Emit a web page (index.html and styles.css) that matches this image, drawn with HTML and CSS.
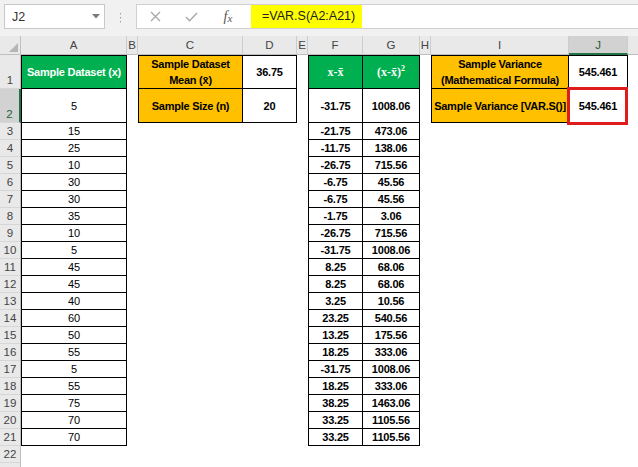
FILE: index.html
```html
<!DOCTYPE html>
<html lang="en">
<head>
    <meta charset="UTF-8">
    <title>Sample Variance - VAR.S</title>
    <link rel="stylesheet" href="styles.css">
</head>
<body>
    <div class="topbar">
        <div class="namebox">
            <span>J2</span>
            <svg class="caret" width="8" height="5" viewBox="0 0 8 5"><path d="M0 0 L8 0 L4 4.5 Z" fill="#7a7a7a"/></svg>
        </div>
        <svg class="grip" width="3" height="10" viewBox="0 0 3 10">
            <rect x="1" y="0" width="1" height="1.4" fill="#9a9a9a"/>
            <rect x="1" y="4" width="1" height="1.4" fill="#9a9a9a"/>
            <rect x="1" y="8" width="1" height="1.4" fill="#9a9a9a"/>
        </svg>
        <div class="formula">
            <div class="fbtn">
                <svg width="11" height="11" viewBox="0 0 11 11"><path d="M1 1 L10 10 M10 1 L1 10" stroke="#a8a8a8" stroke-width="1.3"/></svg>
            </div>
            <div class="fbtn">
                <svg width="13" height="10" viewBox="0 0 13 10"><path d="M1 5 L4.6 8.8 L12 1" fill="none" stroke="#a8a8a8" stroke-width="1.4"/></svg>
            </div>
            <div class="fbtn fx"><span>f<sub>x</sub></span></div>
            <div class="ftext"><span class="hl">=VAR.S(A2:A21)</span></div>
        </div>
    </div>

    <div class="sheet" id="sheet">
        <!-- column headers -->
        <div class="corner">
            <svg width="9" height="9" viewBox="0 0 9 9"><path d="M9 0 L9 9 L0 9 Z" fill="#b5b5b5"/></svg>
        </div>
        <div class="ch">A</div>
        <div class="ch">B</div>
        <div class="ch">C</div>
        <div class="ch">D</div>
        <div class="ch">E</div>
        <div class="ch">F</div>
        <div class="ch">G</div>
        <div class="ch">H</div>
        <div class="ch">I</div>
        <div class="ch sel">J</div>
        <div class="ch last"></div>

        <!-- row 1 -->
        <div class="rh">1</div>
        <div class="cell green b bl bt">Sample Dataset (x)</div>
        <div class="cell"></div>
        <div class="cell orange b bl bt two"><span>Sample Dataset<br>Mean (x̄)</span></div>
        <div class="cell b bt strong">36.75</div>
        <div class="cell"></div>
        <div class="cell green b bl bt math"><span>x-x̄</span></div>
        <div class="cell green b bt math"><span>(x-x̄)<sup>2</sup></span></div>
        <div class="cell"></div>
        <div class="cell orange b bl bt two"><span>Sample Variance<br>(Mathematical Formula)</span></div>
        <div class="cell b bt strong">545.461</div>
        <div class="cell"></div>

        <!-- row 2 -->
        <div class="rh sel">2</div>
        <div class="cell b bl">5</div>
        <div class="cell"></div>
        <div class="cell orange b bl">Sample Size (n)</div>
        <div class="cell b strong">20</div>
        <div class="cell"></div>
        <div class="cell b bl strong">-31.75</div>
        <div class="cell b strong">1008.06</div>
        <div class="cell"></div>
        <div class="cell orange b bl">Sample Variance [VAR.S()]</div>
        <div class="cell b strong active">545.461</div>
        <div class="cell"></div>
    </div>

    <script>
        const dataset = [15, 25, 10, 30, 30, 35, 10, 5, 45, 45, 40, 60, 50, 55, 5, 55, 75, 70, 70];
        const mean = 36.75;
        const sheet = document.getElementById('sheet');

        function cell(cls, text) {
            const div = document.createElement('div');
            div.className = cls;
            div.textContent = text || '';
            sheet.appendChild(div);
        }

        // rows 3..22, plus the top edge of row 23
        for (let row = 3; row <= 23; row++) {
            const x = dataset[row - 3];
            cell('rh', row < 23 ? row : '');
            if (x !== undefined) {
                const diff = x - mean;
                cell('cell b bl', x);
                cell('cell');
                cell('cell');
                cell('cell');
                cell('cell');
                cell('cell b bl strong', diff.toFixed(2));
                cell('cell b strong', (diff * diff).toFixed(2));
            } else {
                for (let i = 0; i < 7; i++) cell('cell');
            }
            cell('cell');
            cell('cell');
            cell('cell');
            cell('cell');
        }
    </script>
</body>
</html>
```

FILE: styles.css
```css
* {
    box-sizing: border-box;
    margin: 0;
    padding: 0;
}

body {
    width: 638px;
    height: 467px;
    overflow: hidden;
    background: #fff;
    font-family: 'Liberation Sans', Arial, sans-serif;
}

/* formula bar */

.topbar {
    height: 36px;
    background: #f1f1f1;
    display: flex;
    align-items: flex-start;
    padding-top: 4px;
    padding-left: 4px;
}

.namebox {
    width: 101px;
    height: 25px;
    background: #fff;
    border: 1px solid #c9c9c9;
    display: flex;
    align-items: center;
    justify-content: space-between;
    padding: 0 4px 0 7px;
    font-size: 12.5px;
    color: #333;
}

.grip {
    margin: 9px 14px 0 14px;
}

.formula {
    flex: 1;
    height: 25px;
    background: #fff;
    border-top: 1px solid #d0d0d0;
    border-bottom: 1px solid #d0d0d0;
    border-left: 1px solid #d0d0d0;
    display: flex;
    align-items: stretch;
}

.fbtn {
    width: 36px;
    display: flex;
    align-items: center;
    justify-content: center;
}

.fx {
    width: 38px;
    font-family: 'Liberation Serif', serif;
    font-style: italic;
    font-size: 14px;
    color: #555;
}

.fx sub {
    font-size: 11px;
    vertical-align: -1px;
}

.ftext {
    margin-left: 4px;
    display: flex;
}

.hl {
    background: #ffff00;
    padding: 0 7px 0 11px;
    line-height: 23px;
    font-size: 12.5px;
    color: #222;
}

/* grid */

.sheet {
    display: grid;
    grid-template-columns: 21px 106px 11px 105px 54px 11px 55px 57px 11px 138px 59px 1fr;
    grid-template-rows: 19px 34px 34px;
    grid-auto-rows: 17px;
}

.corner {
    background: #e9e9e9;
    border-right: 1px solid #bfbfbf;
    border-bottom: 1px solid #bfbfbf;
    display: flex;
    align-items: flex-end;
    justify-content: flex-end;
    padding: 0 2px 2px 0;
}

.ch {
    background: #e9e9e9;
    border-right: 1px solid #cdcdcd;
    border-bottom: 1px solid #bfbfbf;
    display: flex;
    align-items: center;
    justify-content: center;
    font-size: 11.5px;
    color: #444;
}

.ch.sel {
    background: #d2d2d2;
    border-bottom: 2px solid #217346;
    color: #1f5f3d;
}

.ch.last {
    border-right: none;
}

.rh {
    background: #e9e9e9;
    border-right: 1px solid #bfbfbf;
    border-bottom: 1px solid #d6d6d6;
    display: flex;
    align-items: flex-end;
    justify-content: center;
    font-size: 11.5px;
    color: #444;
    line-height: 15px;
}

.rh.sel {
    background: #d2d2d2;
    border-right: 2px solid #217346;
    color: #1f5f3d;
}

.cell {
    display: flex;
    align-items: center;
    justify-content: center;
    text-align: center;
    font-size: 11px;
    color: #000;
    white-space: nowrap;
}

.b {
    border-right: 1px solid #000;
    border-bottom: 1px solid #000;
}

.bl {
    border-left: 1px solid #000;
}

.bt {
    border-top: 1px solid #000;
}

.strong {
    font-weight: bold;
    letter-spacing: -0.2px;
}

.green {
    background: #00b050;
    color: #fff;
    font-weight: bold;
    letter-spacing: -0.25px;
}

.orange {
    background: #ffc000;
    font-weight: bold;
    letter-spacing: -0.25px;
}

.two {
    line-height: 16px;
}

.math {
    font-family: 'Liberation Serif', serif;
    font-size: 12px;
    letter-spacing: 0;
}

.math sup {
    font-size: 8px;
    vertical-align: 5px;
    line-height: 0;
}

.active {
    position: relative;
}

.active::after {
    content: "";
    position: absolute;
    top: -2px;
    left: -2px;
    right: -1px;
    bottom: -3px;
    border: 3px solid #e01b1b;
}
```
